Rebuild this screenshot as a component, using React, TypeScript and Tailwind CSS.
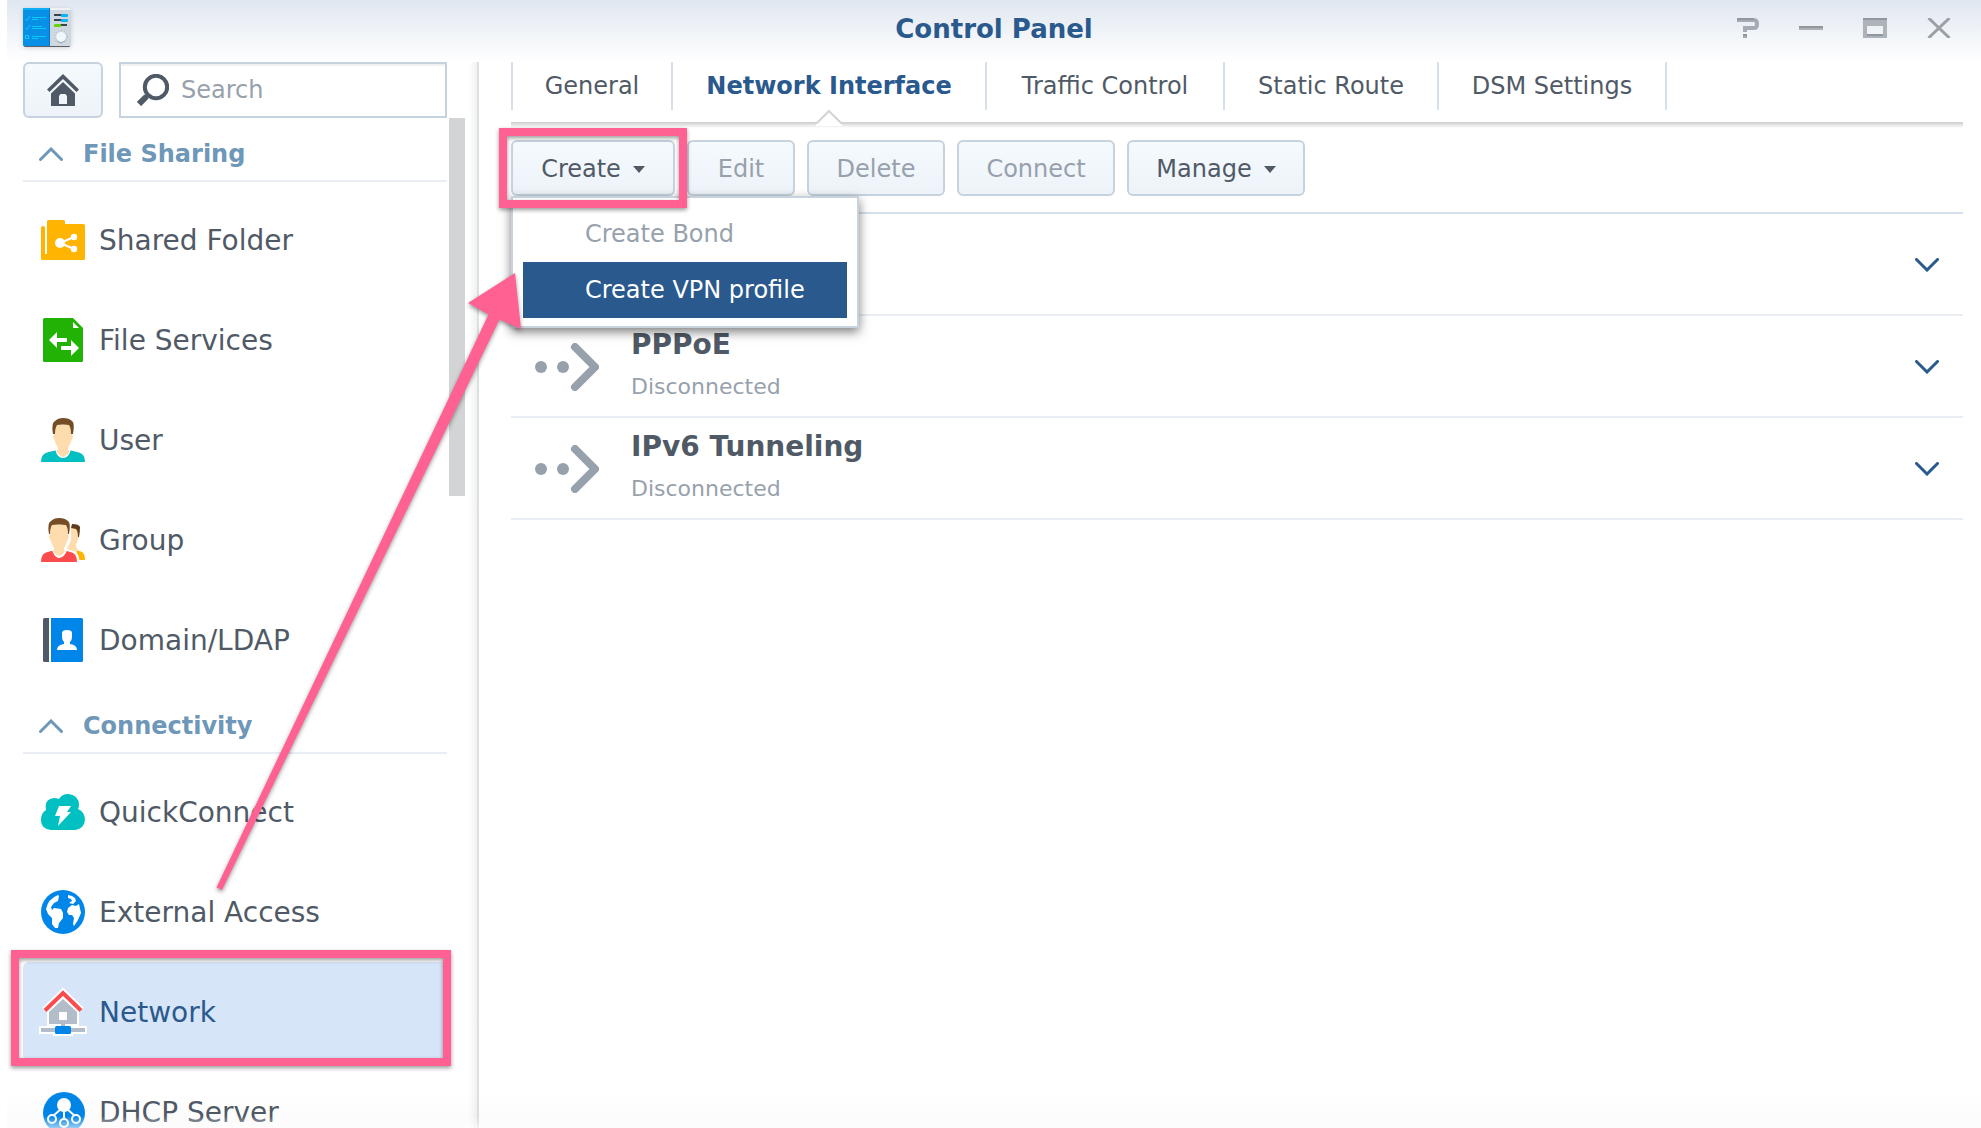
import type { ReactNode } from "react";
import clsx from "clsx";

type SidebarItem = { label: string; icon: ReactNode; active?: boolean };

function ControlPanelIcon() {
  return (
    <svg width="48" height="42" viewBox="0 0 48 42" className="drop-shadow-sm">
      <rect x="1" y="36" width="46" height="3" rx="1" fill="#5d6068" />
      <rect x="27" y="2" width="21" height="36" fill="#cfd8df" />
      <rect x="27" width="20" height="2" fill="#eef2f5" />
      <rect width="27" height="38" rx="1" fill="#0790e6" />
      <rect width="27" height="2" fill="#12aef5" />
      <rect x="26" width="1" height="38" fill="#0670cf" />
      <g fill="none" stroke="#10c8fb" strokeWidth="1">
        <path d="M2.500 11l1.500 1.500L7 8M2.500 20l1.500 1.500L7 17" />
        <path d="M9 9.500h14M9 11.500h6M9 18.500h10M9 20.500h14M9 28.500h14M9 30.500h6" />
        <rect x="2.500" y="27.500" width="3" height="3" />
      </g>
      <g fill="#3c434b">
        <rect x="31" y="6" width="8" height="2" />
        <rect x="31" y="11" width="8" height="2" />
        <rect x="37" y="16" width="7" height="2" />
      </g>
      <rect x="38" y="6" width="7" height="3" rx="1" fill="#08b4f5" />
      <rect x="38" y="11" width="7" height="3" rx="1" fill="#08b4f5" />
      <rect x="31" y="16" width="7" height="3" rx="1" fill="#66d50a" />
      <circle cx="38" cy="29" r="6.500" fill="none" stroke="#aeb9c1" strokeDasharray="1 2" />
      <circle cx="38" cy="30" r="5" fill="#98a5ae" />
      <circle cx="38" cy="29" r="5" fill="#eff8fd" />
    </svg>
  );
}

function HomeIcon() {
  return (
    <svg width="32" height="32" viewBox="0 0 32 32" fill="#505a66">
      <path d="M16 0L32 15.500L29.500 18L16 5L2.500 18L0 15.500Z" />
      <path fillRule="evenodd" d="M16 8L28 19.500V32H4V19.500ZM12 22V30H20V22L18.500 20H13.500Z" />
    </svg>
  );
}

function SearchIcon() {
  return (
    <svg width="32" height="32" viewBox="0 0 32 32" fill="none" stroke="#505a66">
      <circle cx="19" cy="13" r="11.200" strokeWidth="4" />
      <path d="M11 21L9 23" strokeWidth="4" />
      <path d="M9.500 22.500L2 30" strokeWidth="6" />
    </svg>
  );
}

function FolderIcon() {
  return (
    <svg width="44" height="44" viewBox="0 0 44 44">
      <path
        fill="#ffb402"
        d="M0 9.500Q0 8 2 8T4 9.500V36H6V3.500Q6 2 7.500 2H22.500Q24 2 24 3.500V6H42.500Q44 6 44 7.500V40.500Q44 42 42.500 42H1.500Q0 42 0 40.500Z"
      />
      <path d="M33 19L19 25L33 31" fill="none" stroke="#fff" strokeWidth="2" />
      <circle cx="19" cy="25" r="5" fill="#fff" />
      <circle cx="33" cy="19" r="3.200" fill="#fff" />
      <circle cx="33" cy="31" r="3.200" fill="#fff" />
    </svg>
  );
}

function FileIcon() {
  return (
    <svg width="44" height="44" viewBox="0 0 44 44">
      <path
        fill="#22b105"
        d="M3.500 0H32L42 10V42.500Q42 44 40.500 44H3.500Q2 44 2 42.500V1.500Q2 0 3.500 0Z"
      />
      <path d="M32 4V10H38Z" fill="#fff" />
      <path
        fill="#fff"
        d="M8 22L16 14V20H26V24H16V30ZM38 30L30 22V28H20V32H30V38Z"
      />
    </svg>
  );
}

function UserIcon() {
  return (
    <svg width="44" height="44" viewBox="0 0 44 44">
      <path d="M0 44Q0 36 6 34.500L16 32H28L38 34.500Q44 36 44 44Z" fill="#00c0c1" />
      <path d="M14 31L17 29H27L30 31Q28 40 22 40Q16 40 14 31Z" fill="#fff" />
      <path
        fill="#ffdcae"
        d="M13 7H31V17Q33 18 31 21Q29 27 27 30Q27 33 29 33Q26 38 22 39Q18 38 15 33Q17 33 17 30Q15 27 13 21Q11 18 13 17Z"
      />
      <path
        fill="#754d25"
        d="M12 16Q10 5 14 3Q17 0 22 0Q28 0 31 3Q34 5 32 16H30Q30 10 28 7Q22 6 16 7Q14 10 14 16Z"
      />
    </svg>
  );
}

function GroupIcon() {
  return (
    <svg width="44" height="44" viewBox="0 0 44 44">
      <path d="M34 32L40 33.500Q44 35 44 42H37Q37 36 34 32Z" fill="#ffb402" />
      <path d="M30 10H38V17Q39 19 37 21L35 27Q35 31 38 32L34 35L26 31L30 22Z" fill="#ffdcae" />
      <path d="M31 6Q38 6 39 9Q39 13 38 19H37Q37 13 35 11L30 10Z" fill="#5d3c1b" />
      <path
        d="M9 8H28V17Q29 19 27 22L24 28V32L34 35Q37 38 37 44H0Q0 36 12 33Z"
        fill="#fff"
        stroke="#fff"
        strokeWidth="3"
      />
      <path d="M0 44Q0 36 5 34.500L12 32.500H24L31 34.500Q36 36 36 44Z" fill="#fb4c4d" />
      <path d="M11 32L14 31H22L26 32Q24 39 18 40Q13 39 11 32Z" fill="#fff" />
      <path
        fill="#ffdcae"
        d="M9 7H27V17Q29 18 27 21Q25 27 23 30Q23 33 24 33Q22 37 18 38Q14 37 12 33Q13 33 13 30Q11 27 9 21Q7 18 9 17Z"
      />
      <path
        fill="#754d25"
        d="M8 16Q6 5 10 3Q13 0 18 0Q24 0 27 3Q30 5 28 16H27Q27 10 25 7Q18 6 11 7Q9 10 9 16Z"
      />
    </svg>
  );
}

function DomainIcon() {
  return (
    <svg width="44" height="44" viewBox="0 0 44 44">
      <path d="M3.500 0H8V44H3.500Q2 44 2 42.500V1.500Q2 0 3.500 0Z" fill="#505a66" />
      <path d="M10 0H40.500Q42 0 42 1.500V42.500Q42 44 40.500 44H10Z" fill="#0086e8" />
      <path
        fill="#fff"
        d="M21 15Q21 12 26 12Q31 12 31 15L31 19Q31 22 29 24V26Q36 27 36 32H16Q16 27 23 26V24Q21 22 21 19Z"
      />
    </svg>
  );
}

function QuickConnectIcon() {
  return (
    <svg width="44" height="44" viewBox="0 0 44 44">
      <path
        fill="#00c0c1"
        d="M10 40Q0 39 0 30Q0 23 5 20Q3 9 13 8Q16 8 18 9Q21 4 27 4Q38 5 38 15Q38 17 37 19Q44 22 44 30Q43 39 34 40Z"
      />
      <path d="M18 16H30L26 22H30L17 36L19 26H14Z" fill="#fff" />
    </svg>
  );
}

function GlobeIcon() {
  return (
    <svg width="44" height="44" viewBox="0 0 44 44">
      <circle cx="22" cy="22" r="22" fill="#0086e8" />
      <path
        fill="#fff"
        d="M17 5L18 6L17 11L13 13L10 17L11 20L13 18L20 19L22 23V28L18 33L17 38L14 38L11 34V28L7 24L5 19Q7 9 17 5Z"
      />
      <path
        fill="#fff"
        d="M27 18L31 15L35 16L38 14L40 23L37 30L33 36L32 34L33 28L31 25H28L26 22Z"
      />
      <path d="M27 5L31 6L34 8L35 11L32 14L28 13L31 11L30 9L27 8Z" fill="#fff" />
    </svg>
  );
}

function NetworkIcon() {
  return (
    <svg width="44" height="44" viewBox="0 0 44 44" className="overflow-visible">
      <path d="M4 20.500L22 3L40 20.500" fill="none" stroke="#fff" strokeWidth="8" />
      <path d="M-2 36H6V20L22 6L38 20V36H46V44H32V46H12V44H-2Z" fill="#fff" />
      <path d="M22 9L36 22V34H24V38H44V42H0V38H20V34H8V22Z" fill="#b2bdc9" />
      <rect x="18" y="22" width="8" height="8" rx="1" fill="#fff" />
      <path d="M4 20.500L22 3L40 20.500" fill="none" stroke="#fb4c4d" strokeWidth="4" />
      <rect x="14" y="36" width="16" height="8" rx="1.500" fill="#0086e8" />
    </svg>
  );
}

function DhcpIcon() {
  return (
    <svg width="44" height="44" viewBox="0 0 44 44">
      <circle cx="23" cy="23" r="21" fill="#0086e8" />
      <circle cx="23" cy="15" r="7" fill="#fff" />
      <path d="M23 18V28M20 19L12 26M26 19L34 26" stroke="#fff" strokeWidth="2" />
      <g fill="#0086e8" stroke="#fff" strokeWidth="2">
        <circle cx="11" cy="29" r="4" />
        <circle cx="23" cy="33" r="4" />
        <circle cx="35" cy="29" r="4" />
      </g>
    </svg>
  );
}

function DisconnectedIcon() {
  return (
    <svg width="64" height="48" viewBox="0 0 64 48">
      <circle cx="6" cy="24" r="6" fill="#97a1ac" />
      <circle cx="28" cy="24" r="6" fill="#97a1ac" />
      <path
        d="M40 4L60 24L40 44"
        fill="none"
        stroke="#97a1ac"
        strokeWidth="8"
        strokeLinecap="round"
        strokeLinejoin="round"
      />
    </svg>
  );
}

function Chevron({ up = false }: { up?: boolean }) {
  return (
    <svg
      width="24"
      height="14"
      viewBox="0 0 24 14"
      fill="none"
      stroke={up ? "#6e97b8" : "#2a598d"}
      strokeWidth="3"
      strokeLinecap="round"
    >
      <path d={up ? "M1.500 12.500L12 2L22.500 12.500" : "M1.500 1.500L12 12L22.500 1.500"} />
    </svg>
  );
}

function Caret() {
  return (
    <svg width="12" height="7" viewBox="0 0 12 7" fill="#505a66">
      <path d="M0 0H12L6 7Z" />
    </svg>
  );
}

const groups: { title: string; items: SidebarItem[] }[] = [
  {
    title: "File Sharing",
    items: [
      { label: "Shared Folder", icon: <FolderIcon /> },
      { label: "File Services", icon: <FileIcon /> },
      { label: "User", icon: <UserIcon /> },
      { label: "Group", icon: <GroupIcon /> },
      { label: "Domain/LDAP", icon: <DomainIcon /> },
    ],
  },
  {
    title: "Connectivity",
    items: [
      { label: "QuickConnect", icon: <QuickConnectIcon /> },
      { label: "External Access", icon: <GlobeIcon /> },
      { label: "Network", icon: <NetworkIcon />, active: true },
      { label: "DHCP Server", icon: <DhcpIcon /> },
    ],
  },
];

const tabs = [
  { label: "General", width: "w-[160px]" },
  { label: "Network Interface", width: "w-[314px]", active: true },
  { label: "Traffic Control", width: "w-[238px]" },
  { label: "Static Route", width: "w-[214px]" },
  { label: "DSM Settings", width: "w-[230px]" },
];

const connections = [null, "PPPoE", "IPv6 Tunneling"];

function ToolbarButton({
  label,
  width,
  menu,
  disabled,
}: {
  label: string;
  width: string;
  menu?: boolean;
  disabled?: boolean;
}) {
  return (
    <button
      type="button"
      disabled={disabled}
      className={clsx(
        "flex h-14 items-center justify-center gap-3 rounded-md border-2 border-[#c6d2de] bg-linear-to-b from-[#f5faff] to-[#eef3f9] pt-0.5",
        width,
        disabled ? "text-[#97a1ac]" : "text-[#505a66]"
      )}
    >
      {label}
      {menu && <Caret />}
    </button>
  );
}

// Pink frame drawn around a control to point it out
function Highlight({ className }: { className: string }) {
  return (
    <div
      className={clsx(
        "pointer-events-none absolute z-20 border-8 border-[#ff6292] drop-shadow-[0_2px_2px_rgba(0,0,0,0.4)]",
        className
      )}
    />
  );
}

function TitleBar() {
  return (
    <header className="grid h-[62px] shrink-0 grid-cols-[1fr_auto_1fr] items-center bg-linear-to-b from-[#e0e7f0] to-white px-4 pb-1">
      <ControlPanelIcon />
      <h1 className="text-[26px] font-bold text-[#2a598d]">Control Panel</h1>
      <div className="flex justify-end gap-10 pr-3.5 pb-0.5">
        <button type="button" aria-label="Help">
          <svg width="24" height="20" viewBox="0 0 24 20" fill="none" stroke="#a5abb3">
            <path d="M2 2H19Q22 2 22 6T19 10H10V14" strokeWidth="4" />
            <path d="M2 1H19M8 17H12" stroke="#91979f" strokeWidth="2" />
            <path d="M8 19H12" strokeWidth="2" />
          </svg>
        </button>
        <button type="button" aria-label="Minimize">
          <svg width="24" height="20" viewBox="0 0 24 20">
            <path d="M0 8H24V12H0Z" fill="#acb2b7" />
            <path d="M0 8H24V10H0Z" fill="#91979f" />
          </svg>
        </button>
        <button type="button" aria-label="Maximize">
          <svg width="24" height="20" viewBox="0 0 24 20">
            <path fillRule="evenodd" d="M0 0H24V20H0ZM4 8V18H20V8Z" fill="#adb3bb" />
            <path d="M0 0H24V2H0ZM4 16H20V18H4Z" fill="#91979f" />
          </svg>
        </button>
        <button type="button" aria-label="Close">
          <svg width="24" height="20" viewBox="0 0 24 20" stroke="#9ba0a6" strokeWidth="3">
            <path d="M1.500 0L22.500 20M22.500 0L1.500 20" />
          </svg>
        </button>
      </div>
    </header>
  );
}

function Sidebar() {
  return (
    <aside className="flex w-[472px] shrink-0 flex-col border-r-2 border-[#dde0e0] bg-[linear-gradient(to_left,#f0f1f1,#ffffff_8px)] pl-4">
      <div className="flex gap-4">
        <button
          type="button"
          aria-label="Home"
          className="flex h-14 w-20 items-center justify-center rounded-md border-2 border-[#c6d2de] bg-linear-to-b from-[#f5faff] to-[#eef3f9]"
        >
          <HomeIcon />
        </button>
        <label className="flex h-14 w-[328px] items-center gap-3 border-2 border-[#c6d2de] pl-4 shadow-[inset_0_2px_0_#f0f1f2]">
          <SearchIcon />
          <input
            type="search"
            placeholder="Search"
            aria-label="Search"
            className="min-w-0 flex-1 bg-transparent text-2xl outline-none placeholder:text-[#97a1ac]"
          />
        </label>
      </div>

      <div className="flex min-h-0 flex-1 gap-0.5">
        <nav className="w-[424px]">
          {groups.map((group) => (
            <section key={group.title}>
              <h2 className="h-16 border-b-2 border-[#e9eef4] pt-2.5">
                <button
                  type="button"
                  className="flex h-full items-center gap-5 pl-4 text-2xl font-bold text-[#6e97b8]"
                >
                  <Chevron up />
                  {group.title}
                </button>
              </h2>
              <ul className="pt-2">
                {group.items.map((item) => (
                  <li key={item.label} className="relative">
                    <a
                      href="#"
                      className={clsx(
                        "flex h-[100px] items-center gap-3.5 rounded-md pl-[18px] text-[28px]",
                        item.active ? "bg-[#d7e5f8] text-[#2a598d]" : "text-[#505a66]"
                      )}
                    >
                      {item.icon}
                      <span className="pt-0.5">{item.label}</span>
                    </a>
                    {item.active && <Highlight className="-top-3 -right-1 -bottom-1 -left-3" />}
                  </li>
                ))}
              </ul>
            </section>
          ))}
        </nav>
        <div className="h-[378px] w-4 bg-[#d3d4d6]" />
      </div>
    </aside>
  );
}

function CreateMenu() {
  return (
    <ul className="absolute top-14 left-0 z-10 w-[348px] border-2 border-[#c6d2de] bg-white px-2.5 py-2 shadow-[0_4px_10px_rgba(0,0,0,0.5)]">
      <li>
        <button type="button" disabled className="h-14 w-full pl-[62px] text-left text-[#97a1ac]">
          Create Bond
        </button>
      </li>
      <li>
        <button type="button" className="h-14 w-full bg-[#2a598d] pl-[62px] text-left text-white">
          Create VPN profile
        </button>
      </li>
    </ul>
  );
}

function NetworkPage() {
  return (
    <main className="min-w-0 flex-1 pr-[18px] pl-8 text-2xl">
      <nav className="flex h-[60px]">
        {tabs.map((tab) => (
          <a
            key={tab.label}
            href="#"
            className={clsx(
              "relative flex h-12 items-center justify-center border-l-2 border-[#d6e0ed] last:border-r-2",
              tab.width,
              tab.active ? "font-bold text-[#2a598d]" : "text-[#505a66]"
            )}
          >
            {tab.label}
            {tab.active && (
              <svg
                width="28"
                height="16"
                viewBox="0 0 28 16"
                className="absolute top-full left-1/2 z-10 -translate-x-1/2"
              >
                <path d="M0 16L2 13L14 1L26 13L28 16Z" fill="#fff" />
                <path d="M0 13H2L14 1L26 13H28" fill="none" stroke="#d2d3d4" strokeWidth="2" />
              </svg>
            )}
          </a>
        ))}
      </nav>
      <div className="h-1.5 bg-linear-to-b from-[#cdcdcd] to-white" />

      <div className="flex gap-3 border-b-2 border-[#d6e0ed] pt-3 pb-4">
        <div className="relative">
          <ToolbarButton label="Create" width="w-[164px]" menu />
          <CreateMenu />
          <Highlight className="-inset-3" />
        </div>
        <ToolbarButton label="Edit" width="w-[108px]" disabled />
        <ToolbarButton label="Delete" width="w-[138px]" disabled />
        <ToolbarButton label="Connect" width="w-[158px]" disabled />
        <ToolbarButton label="Manage" width="w-[178px]" menu />
      </div>

      <ul>
        {connections.map((name, i) => (
          <li
            key={i}
            className="flex h-[102px] items-center gap-8 border-b-2 border-[#e9eef4] pt-0.5 pr-6 pl-6"
          >
            {name && (
              <>
                <DisconnectedIcon />
                <div className="pb-0.5 leading-[42px]">
                  <h3 className="text-[28px] font-bold text-[#505a66]">{name}</h3>
                  <p className="text-[22px] text-[#97a1ac]">Disconnected</p>
                </div>
              </>
            )}
            <button type="button" aria-label="Expand" className="ml-auto">
              <Chevron />
            </button>
          </li>
        ))}
      </ul>
    </main>
  );
}

export default function App() {
  return (
    <div className="relative flex h-screen flex-col overflow-hidden bg-white pl-[7px] font-['DejaVu_Sans',Verdana,sans-serif]">
      <TitleBar />
      <div className="flex min-h-0 flex-1">
        <Sidebar />
        <NetworkPage />
      </div>

      {/* Fade along the bottom edge of the window */}
      <div className="pointer-events-none absolute right-0 bottom-0 left-[7px] h-9 bg-linear-to-b from-black/0 to-black/2" />
      <div className="pointer-events-none absolute right-0 bottom-0 left-[7px] h-3 bg-linear-to-b from-white/0 to-white/60" />

      {/* Arrow from the Network entry to the create menu */}
      <svg
        width="540"
        height="900"
        viewBox="0 0 540 900"
        className="pointer-events-none absolute top-0 left-0 z-30 drop-shadow-[0_2px_2px_rgba(0,0,0,0.4)]"
      >
        <path
          d="M216.500 887.500L488.500 314.500L468 303L515 273L521 329L499.500 319.500L222 890Z"
          fill="#ff6292"
        />
      </svg>
    </div>
  );
}
